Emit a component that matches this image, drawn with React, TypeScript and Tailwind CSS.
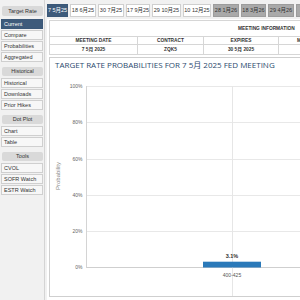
const sideGroups = [
  { title: 'Target Rate', items: ['Current', 'Compare', 'Probabilities', 'Aggregated'] },
  { title: 'Historical', items: ['Historical', 'Downloads', 'Prior Hikes'] },
  { title: 'Dot Plot', items: ['Chart', 'Table'] },
  { title: 'Tools', items: ['CVOL', 'SOFR Watch', 'ESTR Watch'] },
];

const tabs = [
  { label: '7 5月25', w: 'w-[21px]', kind: 'active' },
  { label: '18 6月25', w: 'w-[26px]', kind: 'open' },
  { label: '30 7月25', w: 'w-[26px]', kind: 'open' },
  { label: '17 9月25', w: 'w-[24px]', kind: 'open' },
  { label: '29 10月25', w: 'w-[29px]', kind: 'open' },
  { label: '10 12月25', w: 'w-[28px]', kind: 'open' },
  { label: '28 1月26', w: 'w-[26px]', kind: 'far' },
  { label: '18 3月26', w: 'w-[25px]', kind: 'far' },
  { label: '29 4月26', w: 'w-[26px]', kind: 'far' },
  { label: '', w: 'w-[26px]', kind: 'far' },
];

const gridY = [16.5, 52.5, 89.5, 125.5, 161.5, 197.5];
const gridLabels = ['100%', '80%', '60%', '40%', '20%', '0%'];

const Sidebar = () => (
  <div className="w-[45px] shrink-0 border-r border-[#d4d4d4] pl-[1px] pt-[6px]">
    {sideGroups.map((g, gi) => (
      <div key={g.title} className={gi === 0 ? '' : 'mt-[5px]'}>
        <div
          className={`mx-[1px] mb-[2px] flex items-center justify-center rounded-[2px] bg-[#d9d9d9] text-[5.5px] text-[#333] ${
            gi === 0 ? 'h-[10px] mb-[3px]' : 'h-[9px]'
          }`}
        >
          {g.title}
        </div>
        {g.items.map((item, ii) => {
          const active = gi === 0 && ii === 0;
          return (
            <div
              key={item}
              className={`mb-[1px] flex h-[10px] w-[42px] items-center whitespace-nowrap border pl-[2px] text-[5.5px] ${
                active
                  ? 'border-[#3b5878] bg-[#3e5b7b] text-white'
                  : 'border-[#cfcfcf] bg-[#f7f7f7] text-[#333]'
              }`}
            >
              {item}
            </div>
          );
        })}
      </div>
    ))}
  </div>
);

const Tabs = () => (
  <div className="flex h-[19px] shrink-0 gap-[2px] pl-[2px] pt-[4px]">
    {tabs.map((t, i) => (
      <div
        key={i}
        className={`flex h-[13px] shrink-0 items-center justify-center whitespace-nowrap border text-[5.5px] ${t.w} ${
          t.kind === 'active'
            ? 'border-[#3b5878] bg-[#3e5b7b] text-white'
            : t.kind === 'far'
            ? 'border-[#9c9c9c] bg-[#a9a9a9] text-[#333]'
            : 'border-[#cfcfcf] bg-white text-[#333]'
        }`}
      >
        {t.label}
      </div>
    ))}
  </div>
);

const MeetingTable = () => (
  <div className="w-[300px] border border-[#d6d6d6] text-[4.8px] font-bold whitespace-nowrap text-[#333]">
    <div className="flex h-[16px] items-center border-b border-[#d6d6d6] pl-[188px]">
      MEETING INFORMATION
    </div>
    <div className="flex h-[8px] border-b border-[#d6d6d6]">
      <div className="flex w-[88px] items-center justify-center border-r border-[#d6d6d6]">MEETING DATE</div>
      <div className="flex w-[66px] items-center justify-center border-r border-[#d6d6d6]">CONTRACT</div>
      <div className="flex w-[75px] items-center justify-center border-r border-[#d6d6d6]">EXPIRES</div>
      <div className="flex w-[60px] items-center pl-[18px]">MID</div>
    </div>
    <div className="flex h-[9px]">
      <div className="flex w-[88px] items-center justify-center border-r border-[#d6d6d6]">7 5月 2025</div>
      <div className="flex w-[66px] items-center justify-center border-r border-[#d6d6d6]">ZQK5</div>
      <div className="flex w-[75px] items-center justify-center border-r border-[#d6d6d6]">30 5月 2025</div>
      <div className="w-[60px]" />
    </div>
  </div>
);

const ProbChart = () => (
  <div className="mt-[2px] w-[300px] border border-[#cfcfcf] bg-white">
    <div className="h-[12px] whitespace-nowrap pl-[5px] pt-[3px] font-['Open_Sans','Noto_Sans_CJK_SC',sans-serif] text-[8px] leading-none text-[#2c4a6e]">
      TARGET RATE PROBABILITIES FOR 7 5月 2025 FED MEETING
    </div>
    <svg width="250" height="226" className="block" fontFamily="'Liberation Sans', sans-serif">
      {gridY.map((y, i) => (
        <g key={y}>
          <line x1="36.5" x2="250" y1={y} y2={y} stroke={i === 5 ? '#cfcfcf' : '#e8e8e8'} strokeWidth="1" />
          <text x="32.5" y={y + 1.8} textAnchor="end" fontSize="5" fill="#666">
            {gridLabels[i]}
          </text>
        </g>
      ))}
      <line x1="36.5" x2="36.5" y1="16" y2="198" stroke="#d4d4d4" strokeWidth="1" />
      <line x1="182.5" x2="182.5" y1="16" y2="226" stroke="#e6e6e6" strokeWidth="1" />
      <text
        x="10"
        y="106"
        transform="rotate(-90 10 106)"
        textAnchor="middle"
        fontSize="6"
        fill="#888"
      >
        Probability
      </text>
      <rect x="153" y="191.7" width="58" height="5.8" fill="#2a79b9" />
      <text x="182" y="187.5" textAnchor="middle" fontSize="5.5" fontWeight="bold" fill="#333">
        3.1%
      </text>
      <text x="182" y="206.7" textAnchor="middle" fontSize="5" fill="#555">
        400-425
      </text>
    </svg>
  </div>
);

export default function App() {
  return (
    <div className="flex h-[300px] w-[300px] overflow-hidden bg-[#f1f1f1] font-['Liberation_Sans','Noto_Sans_CJK_SC',sans-serif]">
      <Sidebar />
      <div className="flex min-w-0 flex-1 flex-col">
        <Tabs />
        <div className="ml-[2px] flex-1 overflow-hidden bg-white pl-[2px] pt-[1px]">
          <MeetingTable />
          <ProbChart />
        </div>
      </div>
    </div>
  );
}
